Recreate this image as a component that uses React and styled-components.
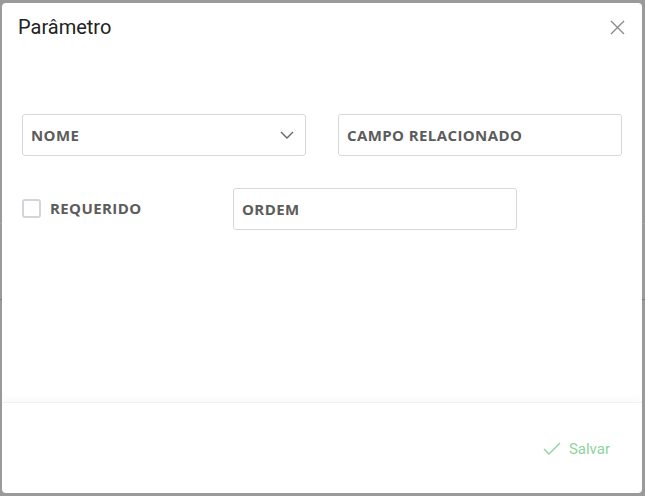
import React from 'react';
import styled, { createGlobalStyle } from 'styled-components';

const GlobalStyle = createGlobalStyle`
  html, body {
    margin: 0;
    padding: 0;
    height: 100%;
  }
  body {
    background: linear-gradient(
      to bottom,
      #9a9a9a 0,
      #9a9a9a 223px,
      #a3a3a3 223px,
      #a3a3a3 224px,
      #9a9a9a 224px,
      #9a9a9a 299px,
      #7c7c7c 299px,
      #7c7c7c 300px,
      #9a9a9a 300px
    );
    font-family: 'Open Sans', 'Liberation Sans', sans-serif;
  }
`;

const Overlay = styled.div`
  display: flex;
  padding: 3px 3px 3px 2px;
  box-sizing: border-box;
  height: 496px;
`;

const Dialog = styled.div`
  flex: 1;
  display: flex;
  flex-direction: column;
  background: #fff;
  border-radius: 4px;
  overflow: hidden;
`;

const Header = styled.div`
  display: flex;
  align-items: center;
  justify-content: space-between;
  height: 47px;
  padding: 0 16px 0 16px;
`;

const Title = styled.h4`
  margin: 0;
  font-family: Roboto, 'Liberation Sans', sans-serif;
  font-weight: 400;
  font-size: 20px;
  color: #222;
`;

const CloseButton = styled.button`
  border: 0;
  background: none;
  padding: 0;
  width: 18px;
  height: 18px;
  display: flex;
  align-items: center;
  justify-content: center;
  margin-top: 1px;
  cursor: pointer;
`;

const Body = styled.div`
  flex: 1;
  padding: 64px 21px 0 20px;
  display: flex;
  flex-direction: column;
  gap: 32px;
`;

const Row = styled.div`
  display: grid;
  grid-template-columns: ${p => p.$cols};
  column-gap: ${p => p.$gap || '0px'};
  align-items: center;
`;

const Field = styled.div`
  height: 42px;
  box-sizing: border-box;
  border: 1px solid #d4d8dd;
  border-radius: 3px;
  display: flex;
  align-items: center;
  justify-content: space-between;
  padding: 0 11px 0 8px;
  font-size: 15px;
  letter-spacing: 0.4px;
  font-weight: 700;
  color: #5c5c5c;
`;

const CheckLabel = styled.label`
  display: flex;
  align-items: center;
  gap: 9px;
  font-size: 15px;
  letter-spacing: 0.4px;
  font-weight: 700;
  color: #5c5c5c;
  margin-top: -2px;
`;

const Box = styled.span`
  width: 19px;
  height: 19px;
  box-sizing: border-box;
  border: 2px solid #d2d5da;
  border-radius: 3px;
`;

const Footer = styled.div`
  height: 91px;
  border-top: 1px solid #f1f1f1;
  box-shadow: 0 -4px 6px rgba(0, 0, 0, 0.025);
  display: flex;
  align-items: center;
  justify-content: flex-end;
  padding: 1px 32px 0 0;
  box-sizing: border-box;
`;

const SaveButton = styled.button`
  border: 0;
  background: none;
  display: flex;
  align-items: center;
  gap: 8px;
  font-family: Roboto, 'Liberation Sans', sans-serif;
  font-size: 15px;
  color: #8fd39e;
  padding: 0;
  cursor: pointer;
`;

const App = () => (
  <>
    <GlobalStyle />
    <Overlay>
      <Dialog>
        <Header>
          <Title>Parâmetro</Title>
          <CloseButton aria-label="Fechar">
            <svg width="15" height="15" viewBox="0 0 15 15">
              <path d="M1 1L14 14M14 1L1 14" stroke="#8a8a8a" strokeWidth="1.4" fill="none" />
            </svg>
          </CloseButton>
        </Header>
        <Body>
          <Row $cols="284px 284px" $gap="32px">
            <Field>
              NOME
              <svg width="14" height="8" viewBox="0 0 14 8">
                <path d="M1 1L7 7L13 1" stroke="#666" strokeWidth="1.4" fill="none" />
              </svg>
            </Field>
            <Field>CAMPO RELACIONADO</Field>
          </Row>
          <Row $cols="211px 284px">
            <CheckLabel>
              <Box />
              REQUERIDO
            </CheckLabel>
            <Field>ORDEM</Field>
          </Row>
        </Body>
        <Footer>
          <SaveButton>
            <svg width="18" height="14" viewBox="0 0 18 14">
              <path d="M1 7L6 12L17 1" stroke="#8fd39e" strokeWidth="1.4" fill="none" />
            </svg>
            Salvar
          </SaveButton>
        </Footer>
      </Dialog>
    </Overlay>
  </>
);

export default App;
